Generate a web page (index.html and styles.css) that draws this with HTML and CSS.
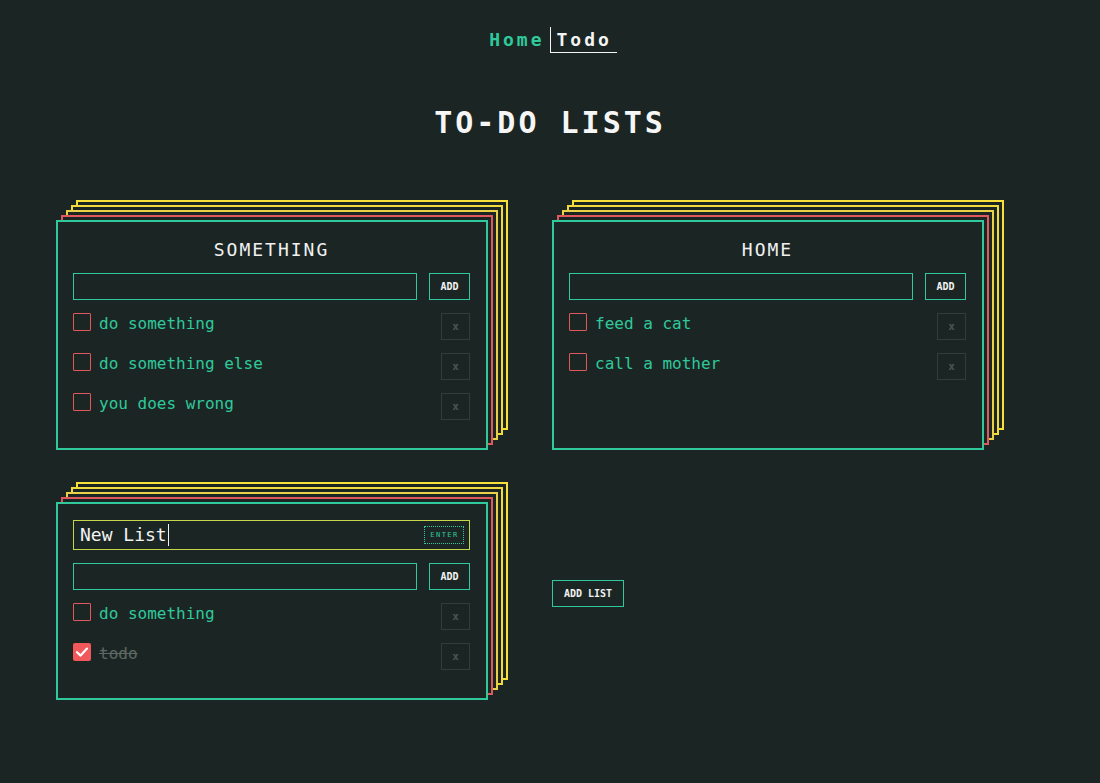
FILE: index.html
```html
<!DOCTYPE html>
<html lang="en">
<head>
<meta charset="utf-8">
<title>To-Do Lists</title>
<link rel="stylesheet" href="styles.css">
</head>
<body>
<nav class="nav">
  <a class="nav-link" href="#">Home</a>
  <a class="nav-link active" href="#">Todo</a>
</nav>
<h1 class="page-title">TO-DO LISTS</h1>
<main class="board">
  <section class="stack">
    <div class="layer l4"></div>
    <div class="layer l3"></div>
    <div class="layer l2"></div>
    <div class="layer l1"></div>
    <div class="card">
      <h2 class="card-title">SOMETHING</h2>
      <div class="add-row">
        <input class="add-input" type="text">
        <button class="btn">ADD</button>
      </div>
      <ul class="items">
        <li class="item"><span class="check"></span><span class="label">do something</span><button class="del">x</button></li>
        <li class="item"><span class="check"></span><span class="label">do something else</span><button class="del">x</button></li>
        <li class="item"><span class="check"></span><span class="label">you does wrong</span><button class="del">x</button></li>
      </ul>
    </div>
  </section>
  <section class="stack">
    <div class="layer l4"></div>
    <div class="layer l3"></div>
    <div class="layer l2"></div>
    <div class="layer l1"></div>
    <div class="card">
      <h2 class="card-title">HOME</h2>
      <div class="add-row">
        <input class="add-input" type="text">
        <button class="btn">ADD</button>
      </div>
      <ul class="items">
        <li class="item"><span class="check"></span><span class="label">feed a cat</span><button class="del">x</button></li>
        <li class="item"><span class="check"></span><span class="label">call a mother</span><button class="del">x</button></li>
      </ul>
    </div>
  </section>
  <section class="stack">
    <div class="layer l4"></div>
    <div class="layer l3"></div>
    <div class="layer l2"></div>
    <div class="layer l1"></div>
    <div class="card">
      <div class="name-field">
        <span class="name-text">New List</span><span class="caret"></span>
        <button class="enter">ENTER</button>
      </div>
      <div class="add-row">
        <input class="add-input" type="text">
        <button class="btn">ADD</button>
      </div>
      <ul class="items">
        <li class="item"><span class="check"></span><span class="label">do something</span><button class="del">x</button></li>
        <li class="item done"><span class="check checked"><svg width="18" height="18" viewBox="0 0 18 18"><path d="M4 9.2 L7.6 12.6 L14 5.6" fill="none" stroke="#fff" stroke-width="2.2" stroke-linecap="round" stroke-linejoin="round"/></svg></span><span class="label">todo</span><button class="del">x</button></li>
      </ul>
    </div>
  </section>
  <div class="add-list-cell">
    <button class="btn add-list">ADD LIST</button>
  </div>
</main>
</body>
</html>
```
FILE: styles.css
```css
html, body {
  margin: 0;
  padding: 0;
  background: #1b2624;
}
body {
  font-family: "DejaVu Sans Mono", "Liberation Mono", monospace;
  color: #f1f1f1;
  min-height: 783px;
}
.nav {
  display: flex;
  justify-content: center;
  padding-top: 27px;
}
.nav-link {
  font-size: 18px;
  font-weight: bold;
  letter-spacing: 3px;
  line-height: 25px;
  padding: 0 5px 0 6px;
  text-decoration: none;
  color: #2fc99b;
}
.nav-link.active {
  color: #f4f4f4;
  border-left: 1px solid #f4f4f4;
  border-bottom: 1px solid #f4f4f4;
}
.page-title {
  margin: 52px 0 0;
  font-size: 30px;
  line-height: 36px;
  letter-spacing: 3px;
  text-align: center;
  font-weight: bold;
  color: #f6f6f6;
}
.board {
  display: grid;
  grid-template-columns: 452px 452px;
  column-gap: 44px;
  row-gap: 32px;
  padding: 59px 0 0 56px;
}
.stack {
  position: relative;
  padding: 20px 20px 0 0;
  display: flex;
  flex-direction: column;
}
.layer {
  position: absolute;
  top: 20px;
  left: 0;
  right: 20px;
  bottom: 0;
  border: 2px solid #e05a5a;
  background: #1b2624;
}
.layer.l1 { transform: translate(5px, -5px); border-color: #e0585c; z-index: 4; }
.layer.l2 { transform: translate(10px, -10px); border-color: #e8d048; z-index: 3; }
.layer.l3 { transform: translate(15px, -15px); border-color: #f3da3c; z-index: 2; }
.layer.l4 { transform: translate(20px, -20px); border-color: #f7e03a; z-index: 1; }
.card {
  position: relative;
  z-index: 5;
  flex: 1;
  border: 2px solid #2fc99b;
  background: #1b2624;
  padding: 16px 16px 28px 15px;
}
.card-title {
  margin: 0 0 12px;
  font-size: 18px;
  line-height: 23px;
  font-weight: normal;
  letter-spacing: 2px;
  text-align: center;
  color: #f1f1f1;
}
.add-row {
  display: flex;
  gap: 12px;
  height: 27px;
}
.add-input {
  flex: 1;
  min-width: 0;
  height: 27px;
  box-sizing: border-box;
  border: 1px solid #2fc99b;
  background: transparent;
  margin: 0;
  padding: 0 6px;
  outline: none;
}
.btn {
  box-sizing: border-box;
  width: 41px;
  height: 27px;
  border: 1px solid #2fc99b;
  background: transparent;
  color: #f1f1f1;
  font-family: "DejaVu Sans Mono", monospace;
  font-weight: bold;
  font-size: 10px;
  padding: 0;
  margin: 0;
}
.items {
  list-style: none;
  margin: 13px 0 0;
  padding: 0;
  display: flex;
  flex-direction: column;
  gap: 13px;
}
.item {
  display: flex;
  align-items: flex-start;
  height: 27px;
}
.check {
  box-sizing: border-box;
  width: 18px;
  height: 18px;
  border: 1px solid #e0585c;
  border-radius: 1px;
  flex: none;
}
.check.checked {
  border: none;
  background: #f0585c;
  border-radius: 2px;
}
.check svg { display: block; }
.label {
  margin-left: 8px;
  font-size: 16px;
  line-height: 22px;
  color: #2fc99b;
}
.item.done .label {
  color: #5e6964;
  text-decoration: line-through;
}
.del {
  margin-left: auto;
  box-sizing: border-box;
  width: 29px;
  height: 27px;
  border: 1px solid #323c39;
  background: transparent;
  color: #4a5551;
  font-family: "DejaVu Sans Mono", monospace;
  font-weight: bold;
  font-size: 11px;
  padding: 0;
}
.name-field {
  box-sizing: border-box;
  height: 30px;
  margin-bottom: 13px;
  border: 1px solid #c6d64c;
  display: flex;
  align-items: center;
  padding: 0 5px 0 6px;
}
.name-text {
  font-size: 18px;
  color: #f3f3f3;
  line-height: 22px;
}
.caret {
  width: 1px;
  height: 22px;
  background: #f3f3f3;
  margin-left: 1px;
}
.enter {
  margin-left: auto;
  box-sizing: border-box;
  width: 40px;
  height: 18px;
  border: 1px dotted #2fc99b;
  background: transparent;
  color: #2fc99b;
  font-family: "DejaVu Sans Mono", monospace;
  font-size: 7px;
  letter-spacing: 1.5px;
  padding: 0 0 0 1px;
}
.add-list-cell {
  display: flex;
  align-items: center;
  padding-top: 5px;
}
.btn.add-list {
  width: 72px;
}
```
